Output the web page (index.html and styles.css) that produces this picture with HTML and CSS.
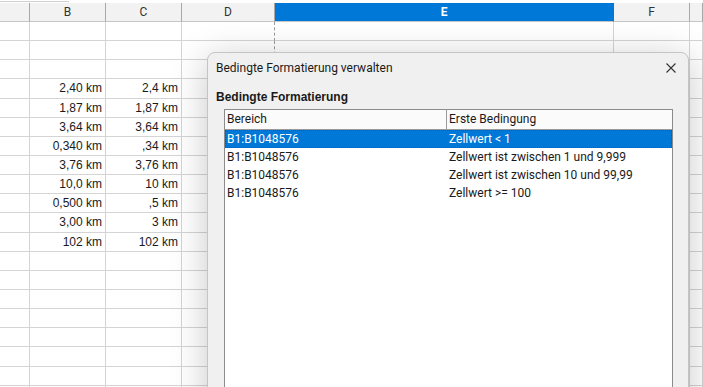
FILE: index.html
```html
<html>
  <head>
    <link rel="stylesheet" href="styles.css">
  </head>
  <body>
    <div class="calc">
      <div class="topbar"><div class="topbar-edge"></div></div>
      <!-- Spaltenköpfe -->
      <div class="row head">
        <div class="cell"></div>
        <div class="cell">B</div>
        <div class="cell">C</div>
        <div class="cell">D</div>
        <div class="cell selected">E</div>
        <div class="cell">F</div>
        <div class="cell"></div>
      </div>
      <!-- Tabellenzeilen -->
      <div class="row"><div class="cell"></div><div class="cell"></div><div class="cell"></div><div class="cell"></div><div class="cell"></div><div class="cell"></div><div class="cell"></div></div>
      <div class="row"><div class="cell"></div><div class="cell"></div><div class="cell"></div><div class="cell"></div><div class="cell"></div><div class="cell"></div><div class="cell"></div></div>
      <div class="row"><div class="cell"></div><div class="cell"></div><div class="cell"></div><div class="cell"></div><div class="cell"></div><div class="cell"></div><div class="cell"></div></div>
      <div class="row"><div class="cell"></div><div class="cell">2,40 km</div><div class="cell">2,4 km</div><div class="cell"></div><div class="cell"></div><div class="cell"></div><div class="cell"></div></div>
      <div class="row"><div class="cell"></div><div class="cell">1,87 km</div><div class="cell">1,87 km</div><div class="cell"></div><div class="cell"></div><div class="cell"></div><div class="cell"></div></div>
      <div class="row"><div class="cell"></div><div class="cell">3,64 km</div><div class="cell">3,64 km</div><div class="cell"></div><div class="cell"></div><div class="cell"></div><div class="cell"></div></div>
      <div class="row"><div class="cell"></div><div class="cell">0,340 km</div><div class="cell">,34 km</div><div class="cell"></div><div class="cell"></div><div class="cell"></div><div class="cell"></div></div>
      <div class="row"><div class="cell"></div><div class="cell">3,76 km</div><div class="cell">3,76 km</div><div class="cell"></div><div class="cell"></div><div class="cell"></div><div class="cell"></div></div>
      <div class="row"><div class="cell"></div><div class="cell">10,0 km</div><div class="cell">10 km</div><div class="cell"></div><div class="cell"></div><div class="cell"></div><div class="cell"></div></div>
      <div class="row"><div class="cell"></div><div class="cell">0,500 km</div><div class="cell">,5 km</div><div class="cell"></div><div class="cell"></div><div class="cell"></div><div class="cell"></div></div>
      <div class="row"><div class="cell"></div><div class="cell">3,00 km</div><div class="cell">3 km</div><div class="cell"></div><div class="cell"></div><div class="cell"></div><div class="cell"></div></div>
      <div class="row"><div class="cell"></div><div class="cell">102 km</div><div class="cell">102 km</div><div class="cell"></div><div class="cell"></div><div class="cell"></div><div class="cell"></div></div>
      <div class="row"><div class="cell"></div><div class="cell"></div><div class="cell"></div><div class="cell"></div><div class="cell"></div><div class="cell"></div><div class="cell"></div></div>
      <div class="row"><div class="cell"></div><div class="cell"></div><div class="cell"></div><div class="cell"></div><div class="cell"></div><div class="cell"></div><div class="cell"></div></div>
      <div class="row"><div class="cell"></div><div class="cell"></div><div class="cell"></div><div class="cell"></div><div class="cell"></div><div class="cell"></div><div class="cell"></div></div>
      <div class="row"><div class="cell"></div><div class="cell"></div><div class="cell"></div><div class="cell"></div><div class="cell"></div><div class="cell"></div><div class="cell"></div></div>
      <div class="row"><div class="cell"></div><div class="cell"></div><div class="cell"></div><div class="cell"></div><div class="cell"></div><div class="cell"></div><div class="cell"></div></div>
      <div class="row"><div class="cell"></div><div class="cell"></div><div class="cell"></div><div class="cell"></div><div class="cell"></div><div class="cell"></div><div class="cell"></div></div>
      <div class="row"><div class="cell"></div><div class="cell"></div><div class="cell"></div><div class="cell"></div><div class="cell"></div><div class="cell"></div><div class="cell"></div></div>
      <div class="row"><div class="cell"></div><div class="cell"></div><div class="cell"></div><div class="cell"></div><div class="cell"></div><div class="cell"></div><div class="cell"></div></div>

      <!-- Dialog: Bedingte Formatierung verwalten -->
      <div class="dialog">
        <div class="dialog-title">
          <span>Bedingte Formatierung verwalten</span>
          <svg class="close" width="10" height="10" viewBox="0 0 10 10">
            <path d="M0.5 0.5 L9.5 9.5 M9.5 0.5 L0.5 9.5" stroke="#333" stroke-width="1.1" fill="none"/>
          </svg>
        </div>
        <div class="section-label">Bedingte Formatierung</div>
        <div class="listbox">
          <div class="list-row list-head">
            <div class="list-cell">Bereich</div>
            <div class="list-cell">Erste Bedingung</div>
          </div>
          <div class="list-row active">
            <div class="list-cell">B1:B1048576</div>
            <div class="list-cell">Zellwert &lt; 1</div>
          </div>
          <div class="list-row">
            <div class="list-cell">B1:B1048576</div>
            <div class="list-cell">Zellwert ist zwischen 1 und 9,999</div>
          </div>
          <div class="list-row">
            <div class="list-cell">B1:B1048576</div>
            <div class="list-cell">Zellwert ist zwischen 10 und 99,99</div>
          </div>
          <div class="list-row">
            <div class="list-cell">B1:B1048576</div>
            <div class="list-cell">Zellwert &gt;= 100</div>
          </div>
        </div>
      </div>
    </div>
  </body>
</html>
```

FILE: styles.css
```css
* {
  margin: 0;
  padding: 0;
  box-sizing: border-box;
}
body {
  background-color: #fff;
  overflow: hidden;
  font-family: "Liberation Sans", Arial, sans-serif;
  font-size: 12px;
  color: #1a1a1a;
}
.calc {
  position: relative;
  width: 703px;
  height: 387px;
  overflow: hidden;
}
.topbar {
  height: 3px;
}
.topbar-edge {
  width: 69px;
  height: 2px;
  border-bottom: 1px solid #d0d0d0;
}
/* Tabellenraster */
.row {
  display: grid;
  grid-template-columns: 30px 76px 76px 93px 339px 76px 1fr;
  height: 19.15px;
}
.cell {
  border-right: 1px solid #d4d4d4;
  border-bottom: 1px solid #d4d4d4;
  text-align: right;
  padding-right: 3px;
  line-height: 18px;
  white-space: nowrap;
}
.cell:nth-child(4) {
  border-right: 1px dashed #9a9a9a;
}
.head {
  height: 19px;
  background-color: #f2f2f2;
}
.head .cell {
  text-align: center;
  padding-right: 0;
  font-family: "Roboto", sans-serif;
  font-size: 12px;
  line-height: 18px;
  color: #333;
  border-right: 1px solid #a8a8a8;
  border-bottom: 1px solid #c6c6c6;
}
.head .cell.selected {
  background-color: #0078d7;
  color: #fff;
  font-weight: bold;
  border-right-color: #0078d7;
}
/* Dialog liegt über der Tabelle */
.dialog {
  position: absolute;
  top: 52px;
  left: 207px;
  width: 482px;
  height: 360px;
  background-color: #f0f0f0;
  border: 1px solid #c4c4c4;
  border-radius: 8px 8px 0 0;
  box-shadow: 0 6px 36px rgba(0, 0, 0, 0.22);
  font-family: "Roboto", sans-serif;
  font-size: 12px;
  color: #1a1a1a;
}
.dialog-title {
  height: 29px;
  display: flex;
  align-items: center;
  justify-content: space-between;
  padding: 0 12px 0 8px;
}
.close {
  display: block;
}
.section-label {
  font-family: "Liberation Sans", Arial, sans-serif;
  font-weight: bold;
  line-height: 16px;
  padding-left: 8px;
  margin-top: 7px;
  margin-bottom: 4px;
}
.listbox {
  margin: 0 15px 0 16px;
  height: 300px;
  background-color: #fff;
  border: 1px solid #8c8c8c;
}
.list-row {
  display: grid;
  grid-template-columns: 222px 1fr;
  height: 18px;
  line-height: 18px;
}
.list-cell {
  padding-left: 2px;
  white-space: nowrap;
}
.list-head {
  height: 20px;
  line-height: 18px;
  background-color: #fbfbfb;
  border-bottom: 1px solid #9a9a9a;
}
.list-head .list-cell:first-child {
  border-right: 1px solid #9a9a9a;
}
.list-row.active {
  background-color: #0078d7;
  color: #fff;
  outline: 1px dotted #4a4a4a;
  outline-offset: -1px;
}
```
